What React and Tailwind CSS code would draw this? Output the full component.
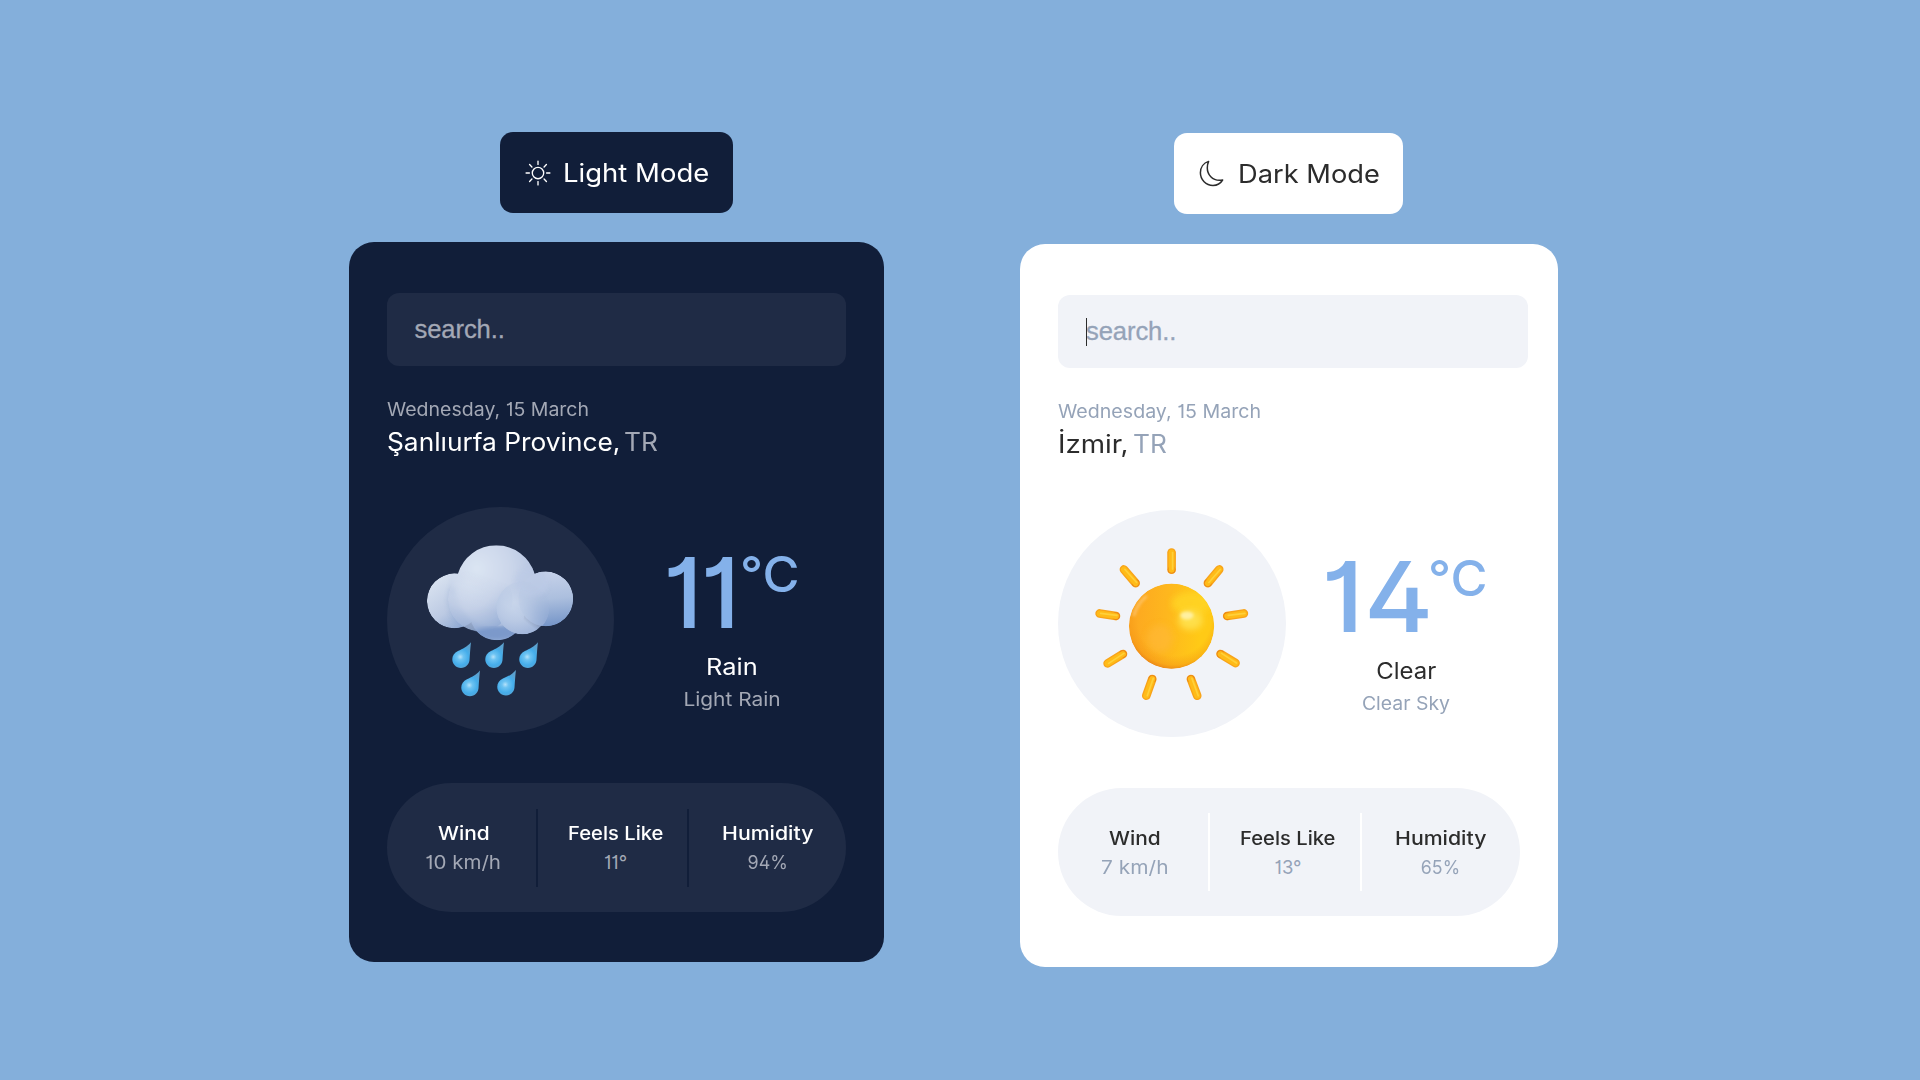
import clsx from "clsx";

function SunOutline() {
  return (
    <svg className="size-9 shrink-0" viewBox="-18 -18 36 36" fill="none" stroke="currentColor" strokeWidth="1.35" strokeLinecap="round">
      <circle r="5.7" />
      {[0, 45, 90, 135, 180, 225, 270, 315].map((a) => (
        <path key={a} d="M0 -8.6V-11.9" transform={`rotate(${a})`} />
      ))}
    </svg>
  );
}

function MoonOutline() {
  return (
    <svg className="size-9 shrink-0" viewBox="0 0 36 36" fill="none" stroke="currentColor" strokeWidth="1.5" strokeLinejoin="round">
      <path d="M15.6 5.4C10.6 7 7.4 11.6 7.4 16.8C7.4 23.8 13 29.4 20 29.4C24.2 29.4 27.6 27.4 29.6 24C28.4 24.2 27.4 24.3 26.4 24.3C19.6 24.3 14.3 18.8 14.3 12C14.3 9.6 14.7 7.4 15.6 5.4Z" />
    </svg>
  );
}

const drops = [
  [242, 476],
  [341, 476],
  [443, 476],
  [269, 561],
  [377, 559],
];

function RainArt() {
  return (
    <svg className="size-full" viewBox="20 20 680 680">
      <defs>
        <radialGradient id="puffTop" gradientUnits="userSpaceOnUse" cx="290" cy="205" r="225">
          <stop offset="0" stopColor="#dbe5f3" />
          <stop offset="0.45" stopColor="#cbd6ea" />
          <stop offset="1" stopColor="#a9bbdc" />
        </radialGradient>
        <linearGradient id="puffLeft" x1="0.1" y1="0.2" x2="0.7" y2="1">
          <stop offset="0" stopColor="#d6e0ef" />
          <stop offset="0.55" stopColor="#bccae3" />
          <stop offset="1" stopColor="#89a5d1" />
        </linearGradient>
        <linearGradient id="puffRight" x1="0.5" y1="0" x2="0.6" y2="1">
          <stop offset="0" stopColor="#c6d2ea" />
          <stop offset="0.5" stopColor="#acbfde" />
          <stop offset="1" stopColor="#7595c8" />
        </linearGradient>
        <linearGradient id="puffBase" x1="0" y1="0" x2="0" y2="1">
          <stop offset="0.45" stopColor="#b7c5e1" />
          <stop offset="0.8" stopColor="#7f9ccc" />
          <stop offset="1" stopColor="#95aed6" />
        </linearGradient>
        <radialGradient id="puffBody" gradientUnits="userSpaceOnUse" cx="265" cy="245" r="160">
          <stop offset="0" stopColor="#d9e3f1" />
          <stop offset="0.5" stopColor="#c4d0e7" />
          <stop offset="1" stopColor="#92abd4" />
        </radialGradient>
        <radialGradient id="puffFront" gradientUnits="userSpaceOnUse" cx="405" cy="305" r="105">
          <stop offset="0" stopColor="#cbd8ec" />
          <stop offset="0.55" stopColor="#b9c9e4" />
          <stop offset="1" stopColor="#a0b5da" />
        </radialGradient>
        <linearGradient id="fadeBody" x1="0.3" y1="0.05" x2="0.15" y2="0.5">
          <stop offset="0" stopColor="#fff" stopOpacity="0" />
          <stop offset="1" stopColor="#fff" />
        </linearGradient>
        <linearGradient id="fadeFront" x1="0.75" y1="0.1" x2="0.35" y2="0.6">
          <stop offset="0" stopColor="#fff" stopOpacity="0" />
          <stop offset="1" stopColor="#fff" />
        </linearGradient>
        <mask id="bodyMask"><circle cx="300" cy="297" r="97" fill="url(#fadeBody)" /></mask>
        <mask id="frontMask"><circle cx="428" cy="323" r="80" fill="url(#fadeFront)" /></mask>
        <filter id="soft" x="-10%" y="-10%" width="120%" height="120%"><feGaussianBlur stdDeviation="6" /></filter>
        <clipPath id="cloudClip">
          <circle cx="348" cy="255" r="120" />
          <circle cx="222" cy="302" r="82" />
          <circle cx="497" cy="296" r="82" />
          <circle cx="350" cy="338" r="82" />
          <circle cx="300" cy="297" r="97" />
          <circle cx="424" cy="323" r="80" />
        </clipPath>
        <radialGradient id="drop" gradientUnits="userSpaceOnUse" cx="-2" cy="-6" r="38">
          <stop offset="0" stopColor="#b5e2fa" />
          <stop offset="0.25" stopColor="#6dc3f2" />
          <stop offset="0.65" stopColor="#45adea" />
          <stop offset="1" stopColor="#5ba2d0" />
        </radialGradient>
      </defs>
      <g clipPath="url(#cloudClip)">
        <circle cx="222" cy="302" r="82" fill="url(#puffLeft)" />
        <circle cx="350" cy="338" r="82" fill="url(#puffBase)" />
        <circle cx="497" cy="296" r="82" fill="url(#puffRight)" />
        <circle cx="300" cy="300" r="99" fill="#8da7d0" opacity="0.3" filter="url(#soft)" />
        <path d="M210 262V120H486V240C470 320 420 375 350 378C290 388 235 345 222 262Z" fill="url(#puffTop)" filter="url(#soft)" />
        <circle cx="497" cy="296" r="82" fill="url(#puffRight)" opacity="0.75" />
        <circle cx="300" cy="297" r="97" fill="url(#puffBody)" mask="url(#bodyMask)" opacity="0.8" />
        <ellipse cx="345" cy="400" rx="62" ry="18" fill="#7b99ca" filter="url(#soft)" />
        <ellipse cx="455" cy="245" rx="50" ry="45" fill="#bccae6" opacity="0.7" filter="url(#soft)" />
        <circle cx="428" cy="323" r="80" fill="url(#puffFront)" mask="url(#frontMask)" />
      </g>
      {drops.map(([x, y]) => (
        <path
          key={`${x}-${y}`}
          transform={`translate(${x} ${y})`}
          d="M30 -50C28 -30 27 -14 26 0C26 15 15 27 0 27C-15 27 -26 15 -26 1C-26 -10 -20 -19 -9 -24C6 -30 18 -36 30 -50Z"
          fill="url(#drop)"
        />
      ))}
    </svg>
  );
}

const rays = [
  [365, 157, 365, 209],
  [508, 208, 474, 249],
  [582, 340, 532, 348],
  [557, 489, 512, 462],
  [442, 587, 423, 537],
  [289, 587, 307, 537],
  [173, 490, 219, 462],
  [149, 340, 198, 348],
  [222, 208, 257, 249],
];

function SunArt() {
  return (
    <svg className="size-full" viewBox="24 30 683 682">
      <defs>
        <linearGradient id="sunBase" x1="0.1" y1="0.35" x2="0.85" y2="0.4">
          <stop offset="0" stopColor="#fdaa20" />
          <stop offset="0.45" stopColor="#feb71e" />
          <stop offset="1" stopColor="#ffca16" />
        </linearGradient>
        <radialGradient id="sunEdge" cx="0.53" cy="0.42" r="0.59">
          <stop offset="0.72" stopColor="#f08a10" stopOpacity="0" />
          <stop offset="0.9" stopColor="#f08a10" stopOpacity="0.35" />
          <stop offset="1" stopColor="#e47a18" stopOpacity="0.85" />
        </radialGradient>
        <filter id="glow" x="-60%" y="-60%" width="220%" height="220%"><feGaussianBlur stdDeviation="9" /></filter>
        <filter id="glint" x="-60%" y="-60%" width="220%" height="220%"><feGaussianBlur stdDeviation="4" /></filter>
        <clipPath id="sunClip"><circle cx="365" cy="378" r="128" /></clipPath>
      </defs>
      {rays.map(([x1, y1, x2, y2]) => (
        <g key={`${x1}-${y1}`} strokeLinecap="round" fill="none">
          <path d={`M${x1} ${y1}L${x2} ${y2}`} stroke="#f8a31a" strokeWidth="26" />
          <path d={`M${x2} ${y2}l0.1 0`} stroke="#e98318" strokeWidth="23" />
          <path d={`M${x1} ${y1}L${x2} ${y2}`} stroke="#ffbb18" strokeWidth="18" />
          <path d={`M${x1 + 3} ${y1}L${x2 + 3} ${y2 - 2}`} stroke="#ffd03a" strokeWidth="5" />
        </g>
      ))}
      <g clipPath="url(#sunClip)">
        <circle cx="365" cy="378" r="128" fill="url(#sunBase)" />
        <ellipse cx="425" cy="310" rx="60" ry="35" fill="#ffd525" opacity="0.8" filter="url(#glow)" />
        <ellipse cx="330" cy="415" rx="38" ry="42" fill="#ffb93a" opacity="0.6" filter="url(#glow)" />
        <circle cx="365" cy="378" r="129" fill="url(#sunEdge)" />
        <path d="M252 345Q264 308 288 290" stroke="#ffd08a" strokeWidth="8" strokeLinecap="round" fill="none" opacity="0.7" filter="url(#glint)" />
        <ellipse cx="422" cy="360" rx="36" ry="30" fill="#ffdf4a" filter="url(#glow)" />
        <ellipse cx="411" cy="346" rx="20" ry="12" fill="#fff0a0" filter="url(#glint)" />
      </g>
    </svg>
  );
}

function Stat({ label, value, labelClass, valueClass, className, theme }) {
  return (
    <div className={clsx("flex h-[78px] flex-col items-center justify-center", className)}>
      <div className={clsx("text-[18.5px] leading-[30px] font-medium", theme.strong, labelClass)}>{label}</div>
      <div className={clsx("text-[18.5px] leading-[29px]", theme.muted, valueClass)}>{value}</div>
    </div>
  );
}

const dark = {
  surface: "bg-[#111e39]",
  panel: "bg-[#1f2b45]",
  strong: "text-white",
  muted: "text-[#a3a8b5]",
};

const light = {
  surface: "bg-white",
  panel: "bg-[#f1f3f8]",
  strong: "text-[#2c2c2c]",
  muted: "text-[#95a3b8]",
};

function DarkPanel() {
  const t = dark;
  return (
    <section className="flex w-[534.5px] flex-col items-center pt-[132.3px]">
      <button className={clsx("flex h-[80.5px] w-[233px] items-center rounded-[13px] pl-5", t.surface, t.strong)}>
        <SunOutline />
        <span className="ml-[7px] origin-left scale-x-110 text-[25px] leading-9 whitespace-nowrap">Light Mode</span>
      </button>
      <div className={clsx("mt-[29.7px] h-[719.2px] w-full rounded-[25px] px-[38px] pt-[50.2px]", t.surface)}>
        <div className={clsx("flex h-[73.3px] w-[459px] items-center rounded-[12px] pl-[27.5px] font-['Liberation_Sans',sans-serif] text-[25.6px] tracking-[-0.1px] [-webkit-text-stroke:0.3px]", t.panel, t.muted)}>search..</div>
        <div className={clsx("mt-[27px] origin-left scale-x-[1.055] text-[18.5px] leading-8", t.muted)}>Wednesday, 15 March</div>
        <div className={clsx("flex gap-[15px] text-[25px] leading-[34px]", t.strong)}>
          <span className="origin-left scale-x-[1.052]">Şanlıurfa Province,</span>
          <span className={clsx("origin-left scale-x-105", t.muted)}>TR</span>
        </div>
        <div className="mt-12 flex w-[464px]">
          <div className={clsx("size-[226.5px] shrink-0 rounded-full", t.panel)}><RainArt /></div>
          <div className="flex flex-1 flex-col items-center pt-[36.3px]">
            <div className="flex h-[100px] items-start pr-[4px] font-medium text-[#84b1ea]">
              <span className="text-[97px] leading-[100px] tracking-[-2px]">11</span>
              <span className="mt-[7px] ml-[2px] origin-left scale-x-[1.03] text-[49px] leading-[50px]">°C</span>
            </div>
            <div className={clsx("mt-[8.5px] scale-x-[1.13] text-[22.5px] leading-[30px]", t.strong)}>Rain</div>
            <div className={clsx("mt-[3px] scale-x-[1.13] text-[18.5px] leading-7", t.muted)}>Light Rain</div>
          </div>
        </div>
        <div className={clsx("mt-[50px] flex h-[128.3px] w-[459px] items-center rounded-full", t.panel)}>
          <Stat theme={t} label="Wind" value="10 km/h" labelClass="scale-x-[1.13]" valueClass="scale-x-[1.11]" className="w-[151px] border-r-2 border-[#111e39] pl-1" />
          <Stat theme={t} label="Feels Like" value="11°" labelClass="scale-x-[1.09]" className="w-[151px] border-r-2 border-[#111e39] pl-1.5" />
          <Stat theme={t} label="Humidity" value="94%" labelClass="scale-x-[1.15]" valueClass="scale-x-[0.97]" className="flex-1" />
        </div>
      </div>
    </section>
  );
}

function LightPanel() {
  const t = light;
  return (
    <section className="flex w-[537.5px] flex-col items-center pt-[133.3px]">
      <button className={clsx("flex h-[81px] w-[229px] items-center rounded-[13px] pl-[19px]", t.surface, t.strong)}>
        <MoonOutline />
        <span className="ml-[8.5px] origin-left scale-x-[1.09] text-[25px] leading-9 whitespace-nowrap">Dark Mode</span>
      </button>
      <div className={clsx("mt-[29.7px] h-[723.3px] w-full rounded-[25px] pt-[50.7px] pl-[38px]", t.surface)}>
        <div className={clsx("relative flex h-[73.5px] w-[469.5px] items-center rounded-[12px] pl-7 font-['Liberation_Sans',sans-serif] text-[25.6px] tracking-[-0.1px] [-webkit-text-stroke:0.3px]", t.panel, t.muted)}>
          search..
          <span className="absolute top-[23px] left-7 h-7 w-px bg-[#2c2c2c]" />
        </div>
        <div className={clsx("mt-[27px] origin-left scale-x-[1.06] text-[18.5px] leading-8", t.muted)}>Wednesday, 15 March</div>
        <div className={clsx("flex gap-[11px] text-[25px] leading-[34px]", t.strong)}>
          <span className="origin-left scale-x-[1.11]">İzmir,</span>
          <span className={clsx("origin-left scale-x-105", t.muted)}>TR</span>
        </div>
        <div className="mt-[48.5px] flex w-[468px]">
          <div className={clsx("size-[227.5px] shrink-0 rounded-full", t.panel)}><SunArt /></div>
          <div className="flex flex-1 flex-col items-center pt-[37px]">
            <div className="flex h-[100px] items-start pr-[5px] font-medium text-[#84b1ea]">
              <span className="origin-left scale-x-[1.09] text-[97px] leading-[100px]">14</span>
              <span className="mt-[7px] ml-[4px] origin-left scale-x-[1.03] text-[49px] leading-[50px]">°C</span>
            </div>
            <div className={clsx("mt-[9px] scale-x-[1.065] text-[22.5px] leading-[30px]", t.strong)}>Clear</div>
            <div className={clsx("mt-[3px] scale-x-105 text-[18.5px] leading-7", t.muted)}>Clear Sky</div>
          </div>
        </div>
        <div className={clsx("mt-[50.5px] flex h-[128.8px] w-[461.5px] items-center rounded-full", t.panel)}>
          <Stat theme={t} label="Wind" value="7 km/h" labelClass="scale-x-[1.13]" valueClass="scale-x-[1.13]" className="w-[152px] border-r-2 border-white pl-1" />
          <Stat theme={t} label="Feels Like" value="13°" labelClass="scale-x-[1.09]" className="w-[152px] border-r-2 border-white pl-1.5" />
          <Stat theme={t} label="Humidity" value="65%" labelClass="scale-x-[1.15]" valueClass="scale-x-[0.96]" className="flex-1" />
        </div>
      </div>
    </section>
  );
}

export default function App() {
  return (
    <main className="flex h-[1080px] w-[1920px] items-start gap-[136.5px] overflow-hidden bg-[#84afdb] pl-[349px] font-['Inter',sans-serif] [font-feature-settings:'cv01','cv02']">
      <DarkPanel />
      <LightPanel />
    </main>
  );
}
